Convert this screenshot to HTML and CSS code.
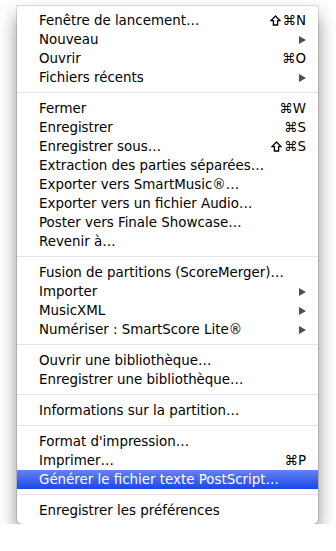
FILE: index.html
```html
<!DOCTYPE html>
<html lang="fr">
<head>
    <meta charset="UTF-8">
    <title>Fichier</title>
    <link rel="stylesheet" href="styles.css">
</head>
<body>
    <div class="menu">
        <div class="item"><span>Fenêtre de lancement…</span><span class="key"><svg class="shift" viewBox="0 0 11 11"><path d="M5.5 1 L10 5.6 H7.6 V10 H3.4 V5.6 H1 Z"/></svg>⌘N</span></div>
        <div class="item"><span>Nouveau</span><span class="arrow"></span></div>
        <div class="item"><span>Ouvrir</span><span class="key">⌘O</span></div>
        <div class="item"><span>Fichiers récents</span><span class="arrow"></span></div>
        <div class="sep"></div>
        <div class="item"><span>Fermer</span><span class="key">⌘W</span></div>
        <div class="item"><span>Enregistrer</span><span class="key">⌘S</span></div>
        <div class="item"><span>Enregistrer sous…</span><span class="key"><svg class="shift" viewBox="0 0 11 11"><path d="M5.5 1 L10 5.6 H7.6 V10 H3.4 V5.6 H1 Z"/></svg>⌘S</span></div>
        <div class="item"><span>Extraction des parties séparées…</span></div>
        <div class="item"><span>Exporter vers SmartMusic®…</span></div>
        <div class="item"><span>Exporter vers un fichier Audio…</span></div>
        <div class="item"><span>Poster vers Finale Showcase…</span></div>
        <div class="item"><span>Revenir à…</span></div>
        <div class="sep"></div>
        <div class="item"><span>Fusion de partitions (ScoreMerger)…</span></div>
        <div class="item"><span>Importer</span><span class="arrow"></span></div>
        <div class="item"><span>MusicXML</span><span class="arrow"></span></div>
        <div class="item"><span>Numériser : SmartScore Lite®</span><span class="arrow"></span></div>
        <div class="sep"></div>
        <div class="item"><span>Ouvrir une bibliothèque…</span></div>
        <div class="item"><span>Enregistrer une bibliothèque…</span></div>
        <div class="sep"></div>
        <div class="item"><span>Informations sur la partition…</span></div>
        <div class="sep"></div>
        <div class="item"><span>Format d'impression…</span></div>
        <div class="item"><span>Imprimer…</span><span class="key">⌘P</span></div>
        <div class="item selected"><span>Générer le fichier texte PostScript…</span></div>
        <div class="sep"></div>
        <div class="item"><span>Enregistrer les préférences</span></div>
    </div>
</body>
</html>
```

FILE: styles.css
```css
body {
    margin: 0;
    padding: 0;
    background-color: #ffffff;
    font-family: "DejaVu Sans", sans-serif;
}

.menu {
    margin: 6px 0 0 17px;
    width: 301px;
    padding: 5px 0 4px 0;
    background-color: #ffffff;
    border-radius: 0 0 5px 5px;
    box-shadow: 0 0 0 1px rgba(0, 0, 0, 0.12), 0 10px 18px rgba(0, 0, 0, 0.45);
}

.item {
    display: flex;
    justify-content: space-between;
    align-items: center;
    height: 19px;
    padding: 0 12px 0 22px;
    font-size: 13.4px;
    color: #000000;
    white-space: nowrap;
}

.item.selected {
    background: linear-gradient(#6683f4, #1a46e8);
    color: #ffffff;
}

.key {
    display: flex;
    align-items: center;
}

.shift {
    width: 11px;
    height: 11px;
    margin-right: 2px;
    fill: none;
    stroke: #000000;
    stroke-width: 1.3;
    stroke-linejoin: miter;
}

.arrow {
    width: 0;
    height: 0;
    border-top: 4px solid transparent;
    border-bottom: 4px solid transparent;
    border-left: 7px solid #4f4f4f;
}

.sep {
    height: 1px;
    margin: 5px 0 6px 0;
    background-color: #e3e3e3;
}
```
